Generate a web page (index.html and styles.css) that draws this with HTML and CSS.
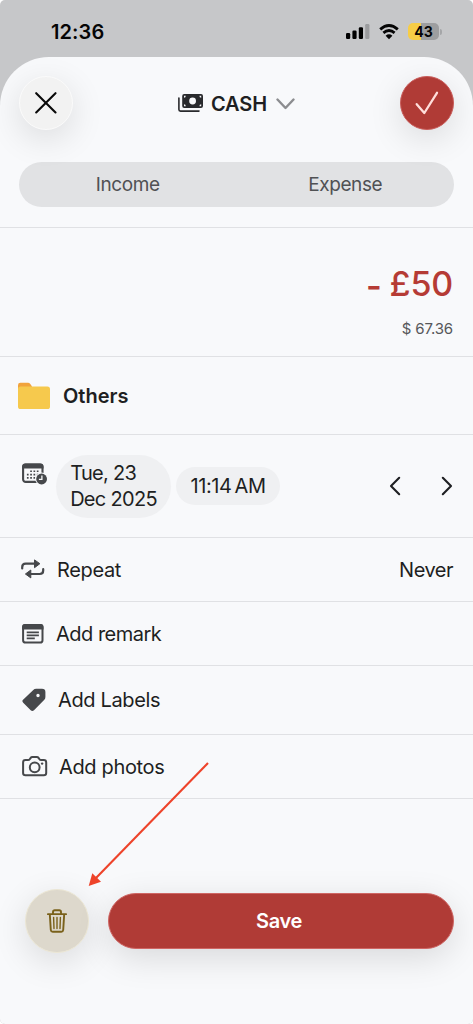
FILE: index.html
```html
<!DOCTYPE html>
<html lang="en">
<head>
<meta charset="utf-8">
<title>Edit transaction</title>
<link rel="stylesheet" href="styles.css">
</head>
<body>
<div class="screen">
  <div class="statusbar">
    <span class="time">12:36</span>
    <div class="status-icons">
      <svg class="signal" width="24" height="16" viewBox="0 0 24 16"><rect x="0" y="9" width="4.2" height="6" rx="1.2"/><rect x="6.4" y="6.5" width="4.2" height="8.5" rx="1.2"/><rect x="12.8" y="3.2" width="4.2" height="11.8" rx="1.2"/><rect class="dim" x="19.2" y="0" width="4.2" height="15" rx="1.2"/></svg>
      <svg class="wifi" width="20" height="16" viewBox="0 0 20 16"><path d="M1.2 5.4Q10-2.4 18.8 5.4M4.4 8.9Q10 4.2 15.6 8.9"/><path class="dot" d="M6.6 11.7Q10 9 13.4 11.7L10 15.2Z"/></svg>
      <div class="battery"><span>43</span></div><i class="cap"></i>
    </div>
  </div>

  <main class="sheet">
    <header class="header">
      <button class="round close" aria-label="Close"><svg width="22" height="22" viewBox="0 0 22 22"><path d="M1.2 1.2L20.5 20.5M20.5 1.2L1.2 20.5"/></svg></button>
      <div class="account">
        <svg width="25" height="19" viewBox="0 0 25 19"><path class="line" d="M.9 4V15.5Q.9 17.1 2.5 17.1H21"/><path class="note" fill-rule="evenodd" d="M6.2 0H23Q25 0 25 2V12Q25 14 23 14H6.2Q4.2 14 4.2 12V2Q4.2 0 6.2 0ZM14.6 3.6A3.4 3.4 0 1 0 14.6 10.4A3.4 3.4 0 1 0 14.6 3.6ZM6 3.7Q7.8 3.6 7.8 1.8H6ZM23.2 3.7Q21.4 3.6 21.4 1.8H23.2ZM6 10.3Q7.8 10.4 7.8 12.2H6ZM23.2 10.3Q21.4 10.4 21.4 12.2H23.2Z"/></svg>
        <span class="account-name">CASH</span>
        <svg class="down" width="19" height="12" viewBox="0 0 19 12"><path d="M1.5 1.5L9.5 10L17.5 1.5"/></svg>
      </div>
      <button class="round confirm" aria-label="Confirm"><svg width="24" height="24" viewBox="0 0 24 24"><path d="M1.7 13.2L9.3 22L22 1.8"/></svg></button>
    </header>

    <div class="tabs-wrap"><div class="tabs"><span><b class="income">Income</b></span><span><b class="expense">Expense</b></span></div></div>

    <section class="amount"><div class="value"><span class="minus">-</span> £50</div><div class="converted">$ 67.36</div></section>

    <section class="row category">
      <svg width="34" height="28" viewBox="0 0 34 28"><path fill="#f1a33c" d="M1 12V3.2Q1 .8 3.4.8H11Q12.4.8 13.3 1.9L15 4.5V12Z"/><rect x="1" y="4.5" width="32" height="22.5" rx="2.6" fill="#f6c94d"/></svg>
      <span class="category-name">Others</span>
    </section>

    <section class="row date-row">
      <svg class="calendar" width="26" height="23" viewBox="0 0 26 23"><rect x="1.1" y="1.5" width="19.4" height="17.4" rx="2.6" fill="none" stroke="#46484b" stroke-width="2.1"/><path fill="#46484b" d="M.1 5.4V3.4Q.1.5 3.1.5H18.5Q21.5.5 21.5 3.4V5.4Z"/><g fill="#46484b"><path d="M8.2 7.4h1.7v1.7H8.2zM11.5 7.4h1.7v1.7h-1.7zM14.8 7.4h1.7v1.7h-1.7zM4.9 10.7h1.7v1.7H4.9zM8.2 10.7h1.7v1.7H8.2zM11.5 10.7h1.7v1.7h-1.7zM14.8 10.7h1.7v1.7h-1.7zM4.9 14h1.7v1.7H4.9zM8.2 14h1.7v1.7H8.2zM11.5 14h1.7v1.7h-1.7z"/></g><circle cx="19.6" cy="16" r="6.4" fill="#f8f9fb"/><circle cx="19.6" cy="16" r="5.4" fill="#46484b"/><path d="M19.9 12.5V16.3H16.9" fill="none" stroke="#f8f9fb" stroke-width="1.3"/></svg>
      <div class="chip date"><span>Tue, 23<br>Dec 2025</span></div>
      <div class="chip clock">11:14<i></i>AM</div>
      <div class="arrows"><svg width="12" height="20" viewBox="0 0 12 20"><path d="M10.2 1.8L2 10L10.2 18.2"/></svg><svg width="12" height="20" viewBox="0 0 12 20"><path d="M1.8 1.8L10 10L1.8 18.2"/></svg></div>
    </section>

    <section class="row repeat">
      <svg width="24" height="20" viewBox="0 0 24 20"><path d="M1.2 9.5V8.2Q1.2 4.7 4.7 4.7H14M22.2 10.2V11.5Q22.2 15 18.7 15H9" fill="none" stroke="#46484b" stroke-width="2.2" stroke-linecap="round"/><path fill="#46484b" stroke="#46484b" stroke-linejoin="round" d="M13.5.9L18.9 4.7L13.5 8.7ZM9.8 11L4.4 15L9.8 18.9Z"/></svg>
      <span class="label">Repeat</span><span class="never">Never</span>
    </section>
    <section class="row remark">
      <svg width="22" height="20" viewBox="0 0 22 20"><rect x="1.1" y="1.1" width="19.4" height="17.5" rx="2.4" fill="none" stroke="#46484b" stroke-width="2"/><path fill="#46484b" d="M.1 5.4V3Q.1.1 3 .1H18.5Q21.5.1 21.5 3V5.4Z"/><path d="M4.7 8.4H16.9M4.7 11.4H16.9M4.7 14.4H12.8" stroke="#46484b" stroke-width="1.6"/></svg>
      <span class="label">Add remark</span>
    </section>
    <section class="row labels">
      <svg width="24" height="24" viewBox="0 0 24 24"><path fill="#46484b" fill-rule="evenodd" d="M14.2.7H20Q23.4.7 23.4 4V8.9Q23.4 10.7 22.1 12L12 22.2Q10.3 23.8 8.7 22.2L1.2 14.7Q-.5 13 1.3 11.4L11.3 1.9Q12.4.7 14.2.7ZM16 5.8A1.7 1.7 0 1 0 16 9.2A1.7 1.7 0 1 0 16 5.8Z"/></svg>
      <span class="label">Add Labels</span>
    </section>
    <section class="row photos">
      <svg width="26" height="21" viewBox="0 0 26 21"><path d="M3.5 4.1H6Q7.2 4.1 7.9 3L8.5 2.1Q9.2 1.1 10.4 1.1H14.8Q16 1.1 16.7 2.1L17.3 3Q18 4.1 19.2 4.1H21.8Q24.2 4.1 24.2 6.5V17Q24.2 19.2 21.8 19.2H3.5Q1.1 19.2 1.1 17V6.5Q1.1 4.1 3.5 4.1Z" fill="none" stroke="#46484b" stroke-width="2"/><circle cx="12.7" cy="11.3" r="4.9" fill="none" stroke="#46484b" stroke-width="2"/><circle cx="20.1" cy="7.6" r="1.2" fill="#46484b"/></svg>
      <span class="label">Add photos</span>
    </section>

    <footer class="actions">
      <button class="trash" aria-label="Delete"><svg width="20" height="24" viewBox="0 0 20 24"><path d="M.9 5.1H19.1M6 4.7V3Q6 1.2 7.8 1.2H12.2Q14 1.2 14 3V4.7M2.8 5.3L3.8 21Q4 22.7 5.7 22.7H14.3Q16 22.7 16.2 21L17.2 5.3" fill="none" stroke="#7a611b" stroke-width="1.9" stroke-linecap="round"/><path d="M6.6 8.4L7 19.5M10 8.4V19.5M13.4 8.4L13 19.5" fill="none" stroke="#7a611b" stroke-width="1.4" stroke-linecap="round"/></svg></button>
      <button class="save"><span>Save</span></button>
    </footer>
  </main>
  <svg class="pointer" width="124" height="128" viewBox="0 0 124 128"><path d="M122 3L10 118" stroke="#ee432a" stroke-width="2.1"/><path d="M2.7 126L6.3 113.2L15 121.8Z" fill="#ee432a"/></svg>
</div>
</body>
</html>
```
FILE: styles.css
```css
* { box-sizing: border-box; }
html { background: #fff; }
body { margin: 0; font-family: Inter, "Liberation Sans", sans-serif; color: #1e1f22; }
button { border: 0; padding: 0; font: inherit; display: flex; align-items: center; justify-content: center; }
svg { display: block; flex: none; }
.screen { position: relative; width: 473px; height: 1024px; background: #c6c7c9; border-radius: 5px; overflow: hidden; }

.statusbar { height: 57px; display: flex; justify-content: space-between; padding: 0 31px 0 51px; color: #050505; }
.time { font-size: 20px; line-height: 24px; margin-top: 20px; font-weight: 600; letter-spacing: .1px; }
.status-icons { display: flex; padding-top: 23px; }
.signal { margin-top: 1px; margin-right: 9px; }
.signal .dim { fill: #9b9c9e; }
.wifi { margin-top: 1px; margin-right: 9px; fill: none; stroke: #050505; stroke-width: 2.8; }
.wifi .dot { fill: #050505; stroke: none; }
.battery { width: 31px; height: 17px; border-radius: 5px; background: linear-gradient(90deg, #f7cd46 0 13px, #9d9ea0 13px); font-size: 14px; line-height: 17px; font-weight: 700; text-align: center; }
.cap { width: 2px; height: 6px; margin: 6px 0 0 1px; border-radius: 0 3px 3px 0; background: #a5a6a8; }

.sheet { height: 967px; background: #f8f9fb; border-radius: 49px 49px 0 0; overflow: hidden; }
.header { height: 105px; padding: 19px 19px 0; display: flex; justify-content: space-between; align-items: flex-start; }
.round { width: 54px; height: 54px; border-radius: 50%; box-shadow: 0 9px 34px rgba(0,0,0,.12); }
.close { background: #f2f2f2; border: 1.5px solid #fafafa; }
.close svg { fill: none; stroke: #0a0a0a; stroke-width: 2.1; stroke-linecap: round; }
.confirm { background: #b03b36; border: 1px solid #c95d5b; }
.confirm svg { fill: none; stroke: #ffdedb; stroke-width: 2.3; stroke-linecap: round; stroke-linejoin: round; }
.account { height: 56px; display: flex; align-items: center; }
.account svg:first-child { margin-bottom: 2px; }
.account .line { fill: none; stroke: #292a2d; stroke-width: 1.6; stroke-linecap: round; }
.account .note { fill: #292a2d; }
.account-name { font-size: 20px; font-weight: 600; margin: 0 9px 0 8px; letter-spacing: -.1px; }
.down { fill: none; stroke: #8c8d90; stroke-width: 2.4; stroke-linecap: round; stroke-linejoin: round; }

.tabs-wrap { height: 66px; padding: 0 19px; border-bottom: 1px solid #e0e1e4; }
.tabs { height: 45px; border-radius: 23px; display: flex; background: #e1e2e4; color: #505154; }
.tabs span { flex: 1; display: flex; align-items: center; justify-content: center; font-size: 19px; letter-spacing: -.4px; }
.tabs b { font-weight: 400; }

.amount { height: 129px; padding: 35px 20px 0; border-bottom: 1px solid #e0e1e4; text-align: right; }
.value { font-size: 34px; line-height: 42px; font-weight: 500; color: #b53b35; letter-spacing: -.2px; }
.minus { position: relative; top: 2px; font-weight: 600; margin-right: -1px; }
.converted { margin-top: 14px; font-size: 15px; line-height: 20px; color: #56575a; letter-spacing: -.15px; }

.row { display: flex; align-items: center; border-bottom: 1px solid #e0e1e4; font-size: 20px; padding: 0 20px 0 22px; }
.category { height: 78px; padding-left: 17px; }
.category-name { font-weight: 600; margin-left: 12px; }
.date-row { height: 103px; }
.calendar { margin-bottom: 23px; }
.chip { display: flex; align-items: center; justify-content: center; background: #eff0f2; line-height: 26px; }
.date { width: 115px; height: 63px; border-radius: 32px; margin-left: 8px; letter-spacing: -.7px; }
.clock { width: 104px; height: 38px; border-radius: 19px; margin-left: 5px; letter-spacing: -.4px; }
.clock i { width: 3px; }
.arrows { display: flex; gap: 40px; margin-left: auto; }
.arrows svg { fill: none; stroke: #1e1f22; stroke-width: 2.1; stroke-linecap: round; stroke-linejoin: round; }
.label { margin-left: 11px; letter-spacing: -.35px; }
.repeat { height: 64px; }
.repeat svg { margin: 0 1px 2px -1px; }
.never { margin-left: auto; letter-spacing: -.5px; }
.remark { height: 64px; }
.remark .label { margin-left: 12px; letter-spacing: -.5px; }
.labels { height: 69px; }
.labels .label { margin-left: 12px; }
.photos { height: 64px; }

.actions { display: flex; align-items: center; gap: 19px; padding: 90px 19px 0 25px; }
.trash { width: 64px; height: 64px; border-radius: 50%; background: #ddd8cc; border: 1px solid #ece7d5; box-shadow: 0 9px 34px rgba(0,0,0,.12); }
.save { flex: 1; height: 56px; border-radius: 28px; background: #b03b36; border: 1px solid #cf6664; color: #fff; font-size: 20px; font-weight: 600; letter-spacing: -.3px; box-shadow: 0 9px 34px rgba(0,0,0,.13); }
.save span { margin-right: 4px; }
.pointer { position: absolute; left: 86px; top: 760px; }
```
